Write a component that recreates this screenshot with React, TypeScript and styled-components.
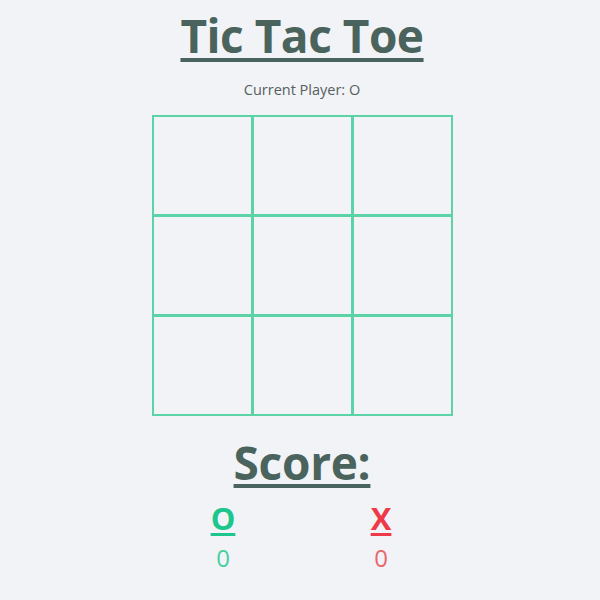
import React, { useState } from "react";
import styled, { createGlobalStyle } from "styled-components";

const Global = createGlobalStyle`
  html, body { margin: 0; padding: 0; background: #f2f3f6; }
  body { font-family: "Open Sans", "Noto Sans", sans-serif; }
`;

const Page = styled.div`
  display: flex;
  flex-direction: column;
  align-items: center;
  padding-top: 5px;
  padding-left: 4px;
`;

const Title = styled.h1`
  margin: 0;
  font-size: 46px;
  line-height: 60px;
  font-weight: 700;
  color: #4a635d;
  text-decoration: underline;
  text-decoration-thickness: 4px;
  text-underline-offset: 5px;
  letter-spacing: -0.5px;
`;

const Status = styled.p`
  margin: 15px 0 15px;
  font-size: 14.5px;
  line-height: 20px;
  color: #55605d;
`;

const Board = styled.div`
  display: grid;
  grid-template-columns: repeat(3, 97px);
  grid-template-rows: repeat(3, 97px);
  gap: 3px;
  background: #5cd2a7;
  border: 2px solid #5cd2a7;
`;

const Cell = styled.button`
  border: none;
  padding: 0;
  margin: 0;
  background: #f2f3f6;
  cursor: pointer;
  font-family: inherit;
  font-size: 60px;
  font-weight: 700;
  color: #4a635d;
`;

const ScoreTitle = styled.h2`
  margin: 18px 0 0;
  font-size: 46px;
  line-height: 56px;
  font-weight: 700;
  color: #4a635d;
  text-decoration: underline;
  text-decoration-thickness: 4px;
  text-underline-offset: 4px;
  letter-spacing: -0.3px;
`;

const Scores = styled.div`
  display: flex;
  gap: 98px;
  margin-top: 10px;
`;

const Column = styled.div`
  width: 60px;
  display: flex;
  flex-direction: column;
  align-items: center;
`;

const PlayerMark = styled.div<{ $color: string }>`
  font-size: 31px;
  line-height: 36px;
  font-weight: 700;
  color: ${(p) => p.$color};
  text-decoration: underline;
  text-decoration-thickness: 3px;
  text-underline-offset: 3px;
`;

const Count = styled.div<{ $color: string }>`
  margin-top: 7px;
  font-size: 24px;
  line-height: 30px;
  color: ${(p) => p.$color};
`;

export default function App() {
  const [cells, setCells] = useState<string[]>(Array(9).fill(""));
  const [player, setPlayer] = useState("O");
  const play = (i: number) => {
    if (cells[i]) return;
    const next = [...cells];
    next[i] = player;
    setCells(next);
    setPlayer(player === "O" ? "X" : "O");
  };
  return (
    <>
      <Global />
      <Page>
        <Title>Tic Tac Toe</Title>
        <Status>Current Player: {player}</Status>
        <Board>
          {cells.map((c, i) => (
            <Cell key={i} onClick={() => play(i)}>
              {c}
            </Cell>
          ))}
        </Board>
        <ScoreTitle>Score:</ScoreTitle>
        <Scores>
          <Column>
            <PlayerMark $color="#1dc68c">O</PlayerMark>
            <Count $color="#46d0a0">0</Count>
          </Column>
          <Column>
            <PlayerMark $color="#ee3a48">X</PlayerMark>
            <Count $color="#e7676d">0</Count>
          </Column>
        </Scores>
      </Page>
    </>
  );
}
